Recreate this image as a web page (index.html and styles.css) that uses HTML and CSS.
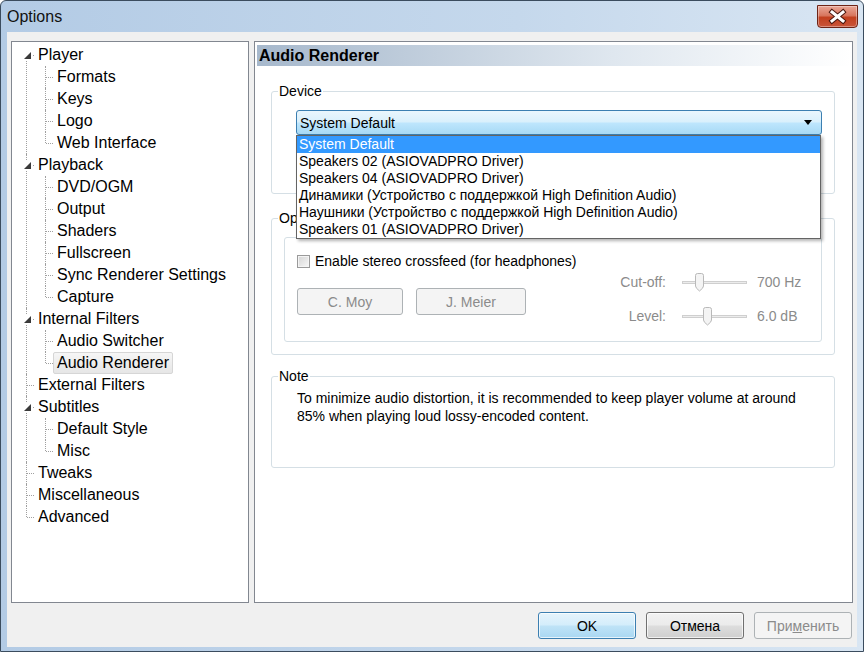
FILE: index.html
```html
<!DOCTYPE html>
<html lang="en">
  <head>
    <meta charset="UTF-8">
    <meta name="viewport" content="width=device-width, initial-scale=1.0">
    <title>Options</title>
    <link rel="stylesheet" href="styles.css">
  </head>
<body>
  <div class="ventana">
    <div class="titulo">
      <span class="titulo-texto">Options</span>
      <button class="cerrar" aria-label="Close">
        <svg width="39" height="20" viewBox="0 0 39 20">
          <path d="M14 5 L25 14 M25 5 L14 14" stroke="#4a1810" stroke-width="5" stroke-linecap="square"/>
          <path d="M14 5 L25 14 M25 5 L14 14" stroke="#ffffff" stroke-width="3" stroke-linecap="square"/>
        </svg>
      </button>
    </div>

    <div class="cliente">
      <div class="paneles">
        <div class="arbol">
          <ul class="nivel-1">
            <li><span class="exp"></span><span class="etiqueta">Player</span>
              <ul class="nivel-2">
                <li><span class="etiqueta">Formats</span></li>
                <li><span class="etiqueta">Keys</span></li>
                <li><span class="etiqueta">Logo</span></li>
                <li><span class="etiqueta">Web Interface</span></li>
              </ul>
            </li>
            <li><span class="exp"></span><span class="etiqueta">Playback</span>
              <ul class="nivel-2">
                <li><span class="etiqueta">DVD/OGM</span></li>
                <li><span class="etiqueta">Output</span></li>
                <li><span class="etiqueta">Shaders</span></li>
                <li><span class="etiqueta">Fullscreen</span></li>
                <li><span class="etiqueta">Sync Renderer Settings</span></li>
                <li><span class="etiqueta">Capture</span></li>
              </ul>
            </li>
            <li><span class="exp"></span><span class="etiqueta">Internal Filters</span>
              <ul class="nivel-2">
                <li><span class="etiqueta">Audio Switcher</span></li>
                <li><span class="etiqueta seleccionada">Audio Renderer</span></li>
              </ul>
            </li>
            <li><span class="etiqueta">External Filters</span></li>
            <li><span class="exp"></span><span class="etiqueta">Subtitles</span>
              <ul class="nivel-2">
                <li><span class="etiqueta">Default Style</span></li>
                <li><span class="etiqueta">Misc</span></li>
              </ul>
            </li>
            <li><span class="etiqueta">Tweaks</span></li>
            <li><span class="etiqueta">Miscellaneous</span></li>
            <li><span class="etiqueta">Advanced</span></li>
          </ul>
        </div>

        <div class="pagina">
          <div class="cabecera">Audio Renderer</div>

          <fieldset class="grupo grupo-dispositivo">
            <legend>Device</legend>
            <div class="combo">
              <span class="combo-texto">System Default</span>
              <span class="combo-flecha"></span>
              <ul class="lista">
                <li class="activo">System Default</li>
                <li>Speakers 02 (ASIOVADPRO Driver)</li>
                <li>Speakers 04 (ASIOVADPRO Driver)</li>
                <li>Динамики (Устройство с поддержкой High Definition Audio)</li>
                <li>Наушники (Устройство с поддержкой High Definition Audio)</li>
                <li>Speakers 01 (ASIOVADPRO Driver)</li>
              </ul>
            </div>
          </fieldset>

          <fieldset class="grupo grupo-opciones">
            <legend>Options</legend>
            <div class="subgrupo">
              <div class="columna-izq">
                <label class="casilla"><span class="caja"></span>Enable stereo crossfeed (for headphones)</label>
                <div class="presets">
                  <button class="boton inactivo boton-moy">C. Moy</button>
                  <button class="boton inactivo boton-meier">J. Meier</button>
                </div>
              </div>
              <div class="columna-der">
                <span class="rotulo">Cut-off:</span>
                <span class="deslizador">
                  <svg class="pulgar" style="left:12px" width="11" height="19" viewBox="0 0 11 19">
                    <path d="M1.5 2.5 Q1.5 0.5 3.5 0.5 H7.5 Q9.5 0.5 9.5 2.5 V13 Q9.5 15 5.5 18 Q1.5 15 1.5 13 Z" fill="#f4f4f4" stroke="#b9b9b9"/>
                  </svg>
                </span>
                <span class="valor">700 Hz</span>
                <span class="rotulo">Level:</span>
                <span class="deslizador">
                  <svg class="pulgar" style="left:20px" width="11" height="19" viewBox="0 0 11 19">
                    <path d="M1.5 2.5 Q1.5 0.5 3.5 0.5 H7.5 Q9.5 0.5 9.5 2.5 V13 Q9.5 15 5.5 18 Q1.5 15 1.5 13 Z" fill="#f4f4f4" stroke="#b9b9b9"/>
                  </svg>
                </span>
                <span class="valor">6.0 dB</span>
              </div>
            </div>
          </fieldset>

          <fieldset class="grupo grupo-nota">
            <legend>Note</legend>
            <p>To minimize audio distortion, it is recommended to keep player volume at around<br>85% when playing loud lossy-encoded content.</p>
          </fieldset>
        </div>
      </div>

      <div class="botones">
        <button class="boton boton-ok">OK</button>
        <button class="boton">Отмена</button>
        <button class="boton inactivo">При<u>м</u>енить</button>
      </div>
    </div>
  </div>
</body>
</html>
```

FILE: styles.css
```css
  :root {
    --borde-panel: #828790;
    --borde-grupo: #d5dfe5;
    --texto-inactivo: #8b8b8b;
    --fondo-cliente: #f0f0f0;
    --color-seleccion: #3399ff;
    --linea-arbol: #a0a0a0;
  }

  body {
    margin: 0;
    font-family: 'Liberation Sans', Arial, sans-serif;
    font-size: 14px;
    color: #000;
  }

  .ventana {
    width: 864px;
    height: 652px;
    box-sizing: border-box;
    border: 1px solid #3b4c5e;
    border-radius: 6px 6px 0 0;
    background: linear-gradient(to right, #b3cbe5, #c5d8ec 60%, #d9e6f3);
    display: flex;
    flex-direction: column;
  }

  /* barra de titulo */
  .titulo {
    height: 31px;
    display: flex;
    justify-content: space-between;
    align-items: flex-start;
    padding: 0 5px 0 6px;
    flex-shrink: 0;
  }

  .titulo-texto {
    font-size: 16px;
    line-height: 32px;
    color: #111;
  }

  .cerrar {
    width: 41px;
    height: 23px;
    margin-top: 4px;
    padding: 0;
    border: 1px solid #6e2416;
    border-radius: 0 0 4px 4px;
    background: linear-gradient(#e9a797, #d8775f 45%, #c2401f 55%, #c9553a);
    box-shadow: inset 0 0 0 1px rgba(255,255,255,0.35);
    display: flex;
    align-items: center;
    justify-content: center;
  }

  .cliente {
    flex: 1;
    margin: 0 6px 4px;
    background: var(--fondo-cliente);
    padding: 9px 4px 8px;
    display: flex;
    flex-direction: column;
  }

  .paneles {
    display: flex;
    gap: 5px;
    height: 562px;
  }

  /* arbol de categorias */
  .arbol {
    width: 238px;
    box-sizing: border-box;
    border: 1px solid var(--borde-panel);
    background: white;
    padding-top: 2px;
    font-size: 16px;
    line-height: 22px;
    overflow: hidden;
  }

  .arbol ul {
    list-style: none;
    margin: 0;
    padding: 0;
  }

  .arbol li {
    position: relative;
    padding-left: 22px;
  }

  .arbol .nivel-2 {
    margin-left: -3px;
  }

  .arbol li::before {
    content: "";
    position: absolute;
    left: 14px;
    top: 0;
    bottom: 0;
    border-left: 1px dotted var(--linea-arbol);
  }

  .nivel-1 > li:first-child::before {
    top: 11px;
  }

  .arbol li:last-child::before {
    bottom: auto;
    height: 11px;
  }

  .arbol li::after {
    content: "";
    position: absolute;
    left: 15px;
    top: 11px;
    width: 7px;
    border-top: 1px dotted var(--linea-arbol);
  }

  .exp {
    position: absolute;
    left: 10px;
    top: 6px;
    width: 10px;
    height: 10px;
    background: white;
    z-index: 1;
  }

  .exp::before {
    content: "";
    position: absolute;
    left: 2px;
    top: 2px;
    width: 7px;
    height: 7px;
    background: #3a3a3a;
    clip-path: polygon(100% 0, 100% 100%, 0 100%);
  }

  .etiqueta {
    display: inline-block;
    vertical-align: top;
    line-height: 20px;
    padding: 0 3px;
    border: 1px solid transparent;
    border-radius: 2px;
    white-space: nowrap;
  }

  .etiqueta.seleccionada {
    background: linear-gradient(#f6f6f6, #e6e6e6);
    border-color: #d6d6d6;
  }

  /* pagina de opciones */
  .pagina {
    flex: 1;
    border: 1px solid var(--borde-panel);
    background: white;
  }

  .cabecera {
    margin: 3px 1px 0 2px;
    height: 21px;
    line-height: 21px;
    padding-left: 2px;
    font-size: 16px;
    font-weight: bold;
    background: linear-gradient(to right, #a6b8cc, #dfe7ef 60%, #ffffff);
  }

  .grupo {
    margin: 0 17px 0 16px;
    padding: 0;
    border: 1px solid var(--borde-grupo);
    border-radius: 3px;
    min-width: 0;
  }

  .grupo legend {
    margin-left: 6px;
    padding: 0 1px;
    line-height: 16px;
  }

  .grupo-dispositivo {
    margin-top: 17px;
  }

  .grupo-opciones {
    margin-top: 16px;
  }

  .grupo-nota {
    margin-top: 13px;
  }

  .combo {
    position: relative;
    margin: 11px 12px 58px 24px;
    height: 25px;
    box-sizing: border-box;
    border: 1px solid #3c7fb1;
    border-radius: 3px;
    background: linear-gradient(#eaf6fd, #d9f0fc 48%, #bee6fd 52%, #a7d9f5);
    display: flex;
    align-items: center;
    padding-left: 3px;
  }

  .combo-texto {
    flex: 1;
  }

  .combo-flecha {
    width: 0;
    height: 0;
    margin-right: 9px;
    border-left: 4px solid transparent;
    border-right: 4px solid transparent;
    border-top: 5px solid #000;
  }

  .lista {
    position: absolute;
    top: 24px;
    left: -1px;
    right: 0;
    margin: 0;
    padding: 0;
    list-style: none;
    background: white;
    border: 1px solid #646464;
    box-shadow: 2px 2px 3px rgba(0,0,0,0.3);
    z-index: 5;
  }

  .lista li {
    height: 17px;
    line-height: 17px;
    padding-left: 2px;
    white-space: nowrap;
  }

  .lista li.activo {
    background: var(--color-seleccion);
    color: white;
  }

  .subgrupo {
    margin: 11px 12px 12px;
    border: 1px solid var(--borde-grupo);
    border-radius: 3px;
    display: flex;
    justify-content: space-between;
  }

  .columna-izq {
    padding: 14px 0 26px 12px;
  }

  .casilla {
    display: flex;
    align-items: center;
    height: 18px;
  }

  .caja {
    width: 13px;
    height: 13px;
    box-sizing: border-box;
    border: 1px solid #9a9a9a;
    background: linear-gradient(135deg, #d4d4d4, #f7f7f7);
    box-shadow: inset 0 0 0 1px #f4f4f4;
    margin-right: 5px;
  }

  .presets {
    display: flex;
    gap: 13px;
    margin-top: 18px;
  }

  .columna-der {
    display: grid;
    grid-template-columns: 60px 65px 45px;
    grid-auto-rows: 20px;
    column-gap: 16px;
    row-gap: 14px;
    align-items: center;
    padding: 34px 13px 0 0;
    align-content: start;
    color: var(--texto-inactivo);
  }

  .columna-der .valor {
    margin-left: -6px;
  }

  .rotulo {
    text-align: right;
  }

  .deslizador {
    position: relative;
    height: 20px;
  }

  .deslizador::before {
    content: "";
    position: absolute;
    left: 0;
    right: 0;
    top: 9px;
    height: 1px;
    border: 1px solid #cfcfcf;
    background: #ececec;
  }

  .pulgar {
    position: absolute;
    top: 1px;
  }

  .grupo-nota p {
    margin: 0;
    padding: 5px 20px 42px 25px;
    line-height: 18px;
  }

  /* botones */
  .boton {
    font-family: inherit;
    font-size: 14px;
    height: 27px;
    box-sizing: border-box;
    border: 1px solid #707070;
    border-radius: 3px;
    background: linear-gradient(#f2f2f2, #ebebeb 48%, #dddddd 52%, #cfcfcf);
    box-shadow: inset 0 0 0 1px rgba(255,255,255,0.7);
    color: #000;
    padding: 0;
  }

  .boton.inactivo {
    border-color: #adb2b5;
    background: #f4f4f4;
    box-shadow: none;
    color: var(--texto-inactivo);
  }

  .boton-moy {
    width: 106px;
  }

  .boton-meier {
    width: 110px;
  }

  .botones {
    display: flex;
    justify-content: flex-end;
    gap: 10px;
    margin-top: 9px;
    padding-right: 1px;
  }

  .botones .boton {
    width: 98px;
  }

  .boton-ok {
    border-color: #3c7fb1;
    background: linear-gradient(#e5f4fc, #d4edfb 48%, #bfe3f7 52%, #a9d7f2);
  }
```
